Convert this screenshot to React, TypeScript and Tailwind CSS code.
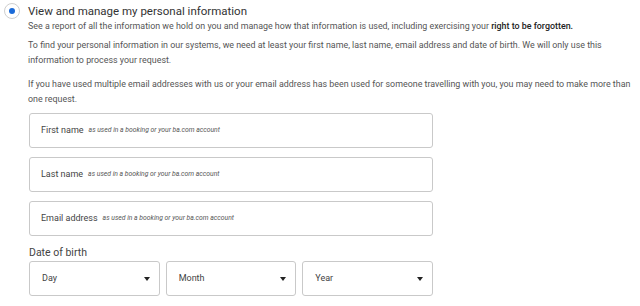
const fields = ['First name', 'Last name', 'Email address']
const selects = ['Day', 'Month', 'Year']

function Caret() {
  return (
    <svg width="6" height="4" viewBox="0 0 6 4" aria-hidden="true" className="flex-none">
      <path d="M0 0h6L3 4z" fill="#222" />
    </svg>
  )
}

export default function App() {
  return (
    <div className="h-[306px] w-[640px] overflow-hidden bg-white font-['Roboto',sans-serif]">
      <div className="flex items-center pl-[4px] pt-[3px]">
        <span className="flex size-[16px] items-center justify-center rounded-full border border-[#cfcfcf]">
          <span className="size-[6px] rounded-full bg-[#1a6ad8]" />
        </span>
        <h1 className="ml-[8px] text-[11.5px] leading-[16px] text-[#333]">View and manage my personal information</h1>
      </div>
      <div className="pl-[28px] text-[8.9px] leading-[15px] text-[#555]">
        <p>
          See a report of all the information we hold on you and manage how that information is used, including exercising your{' '}
          <span className="font-medium text-[#222]">right to be forgotten.</span>
        </p>
        <p className="mt-[4px]">
          To find your personal information in our systems, we need at least your first name, last name, email address and date of birth. We will only use this information to process your request.
        </p>
        <p className="mt-[9px]">
          If you have used multiple email addresses with us or your email address has been used for someone travelling with you, you may need to make more than one request.
        </p>
      </div>
      <div className="ml-[29px] mt-[6px] flex w-[404px] flex-col gap-[9px]">
        {fields.map((f) => (
          <div key={f} className="flex h-[35px] items-center rounded-[3px] border border-[#c9c9c9] px-[11px]">
            <span className="text-[9px] text-[#444]">{f}</span>
            <span className="ml-[5px] text-[6.8px] italic text-[#555]">as used in a booking or your ba.com account</span>
          </div>
        ))}
        <div>
          <div className="text-[10.5px] leading-[16px] text-[#444]">Date of birth</div>
          <div className="grid grid-cols-3 gap-[6px]">
            {selects.map((s) => (
              <div key={s} className="flex h-[35px] items-center justify-between rounded-[3px] border border-[#c9c9c9] pl-[12px] pr-[9px]">
                <span className="text-[9px] text-[#444]">{s}</span>
                <Caret />
              </div>
            ))}
          </div>
        </div>
      </div>
    </div>
  )
}
